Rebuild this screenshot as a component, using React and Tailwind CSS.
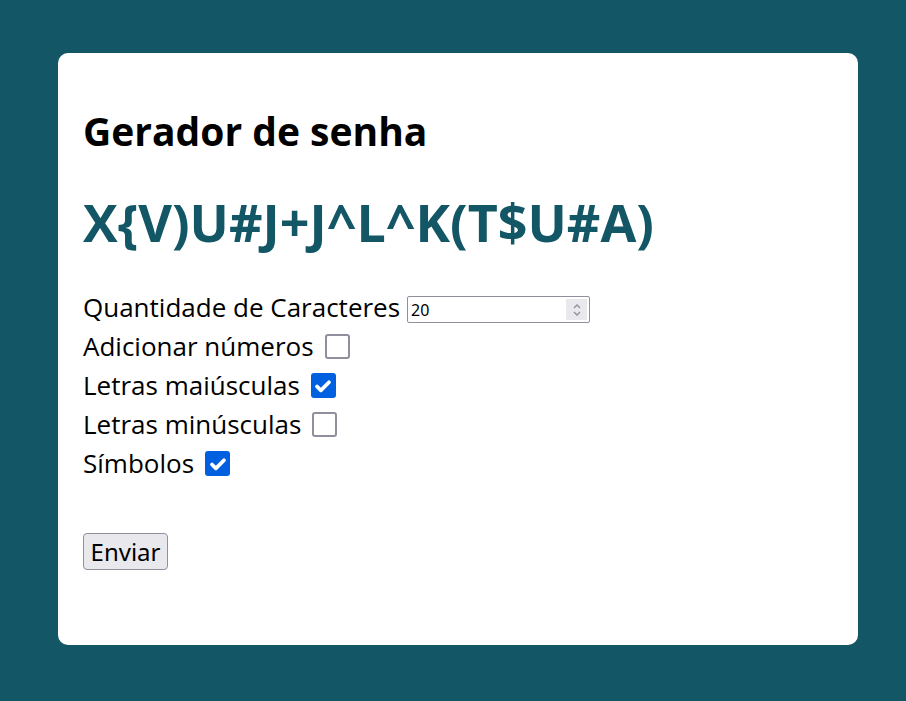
import { useState } from "react";

function Box({ checked, onClick }) {
  return (
    <span
      onClick={onClick}
      className={
        "ml-[11px] inline-flex h-[25px] w-[25px] items-center justify-center rounded-[3px] " +
        (checked ? "bg-[#0060df]" : "border-2 border-[#8f8f9d] bg-white")
      }
    >
      {checked && (
        <svg viewBox="0 0 16 16" className="h-[20px] w-[20px]" fill="none">
          <path d="M3.2 8.4l3.1 3.1L12.8 5" stroke="white" strokeWidth="3" strokeLinecap="round" strokeLinejoin="round" />
        </svg>
      )}
    </span>
  );
}

export default function App() {
  const [opts, setOpts] = useState({ numeros: false, maiusculas: true, minusculas: false, simbolos: true });
  const [qtd, setQtd] = useState("20");
  const toggle = (k) => setOpts({ ...opts, [k]: !opts[k] });

  return (
    <div className="min-h-[701px] bg-[#135766] pl-[58px] pt-[53px] font-['Open_Sans',sans-serif]">
      <div className="h-[592px] w-[800px] rounded-[10px] bg-white px-[25px] pt-[54px]">
        <h2 className="text-[39px] font-bold leading-[47px] text-black">Gerador de senha</h2>
        <h1 className="mt-[34px] text-[52px] font-bold leading-[68px] text-[#135766]">X{"{"}V)U#J+J^L^K(T$U#A)</h1>
        <form className="mt-[32px] text-[26px] leading-[39px] text-black" onSubmit={(e) => e.preventDefault()}>
          <div className="flex items-center">
            <span>Quantidade de Caracteres</span>
            <div className="ml-[7px] mt-[4px] flex h-[27px] w-[183px] items-center rounded-[2px] border border-[#8f8f9d] bg-white pl-[3px] pr-[2px]">
              <input
                value={qtd}
                onChange={(e) => setQtd(e.target.value)}
                className="w-full min-w-0 font-['Noto_Sans',sans-serif] text-[16px] leading-none outline-none"
              />
              <span className="flex h-[21px] w-[24px] flex-col items-center justify-center bg-[#e9e9ed]">
                <svg viewBox="0 0 10 16" className="h-[16px] w-[10px]" fill="none" stroke="#8f8f9d" strokeWidth="1.3">
                  <path d="M2 6l3-3 3 3M2 10l3 3 3-3" />
                </svg>
              </span>
            </div>
          </div>
          <div className="flex items-center">
            <span>Adicionar números</span>
            <Box checked={opts.numeros} onClick={() => toggle("numeros")} />
          </div>
          <div className="flex items-center">
            <span>Letras maiúsculas</span>
            <Box checked={opts.maiusculas} onClick={() => toggle("maiusculas")} />
          </div>
          <div className="flex items-center">
            <span>Letras minúsculas</span>
            <Box checked={opts.minusculas} onClick={() => toggle("minusculas")} />
          </div>
          <div className="flex items-center">
            <span>Símbolos</span>
            <Box checked={opts.simbolos} onClick={() => toggle("simbolos")} />
          </div>
          <button
            type="submit"
            className="mt-[50px] block h-[37px] w-[85px] rounded-[4px] border border-[#8f8f9d] bg-[#e9e9ed] font-['Noto_Sans',sans-serif] text-[24px] leading-none text-black"
          >
            Enviar
          </button>
        </form>
      </div>
    </div>
  );
}
